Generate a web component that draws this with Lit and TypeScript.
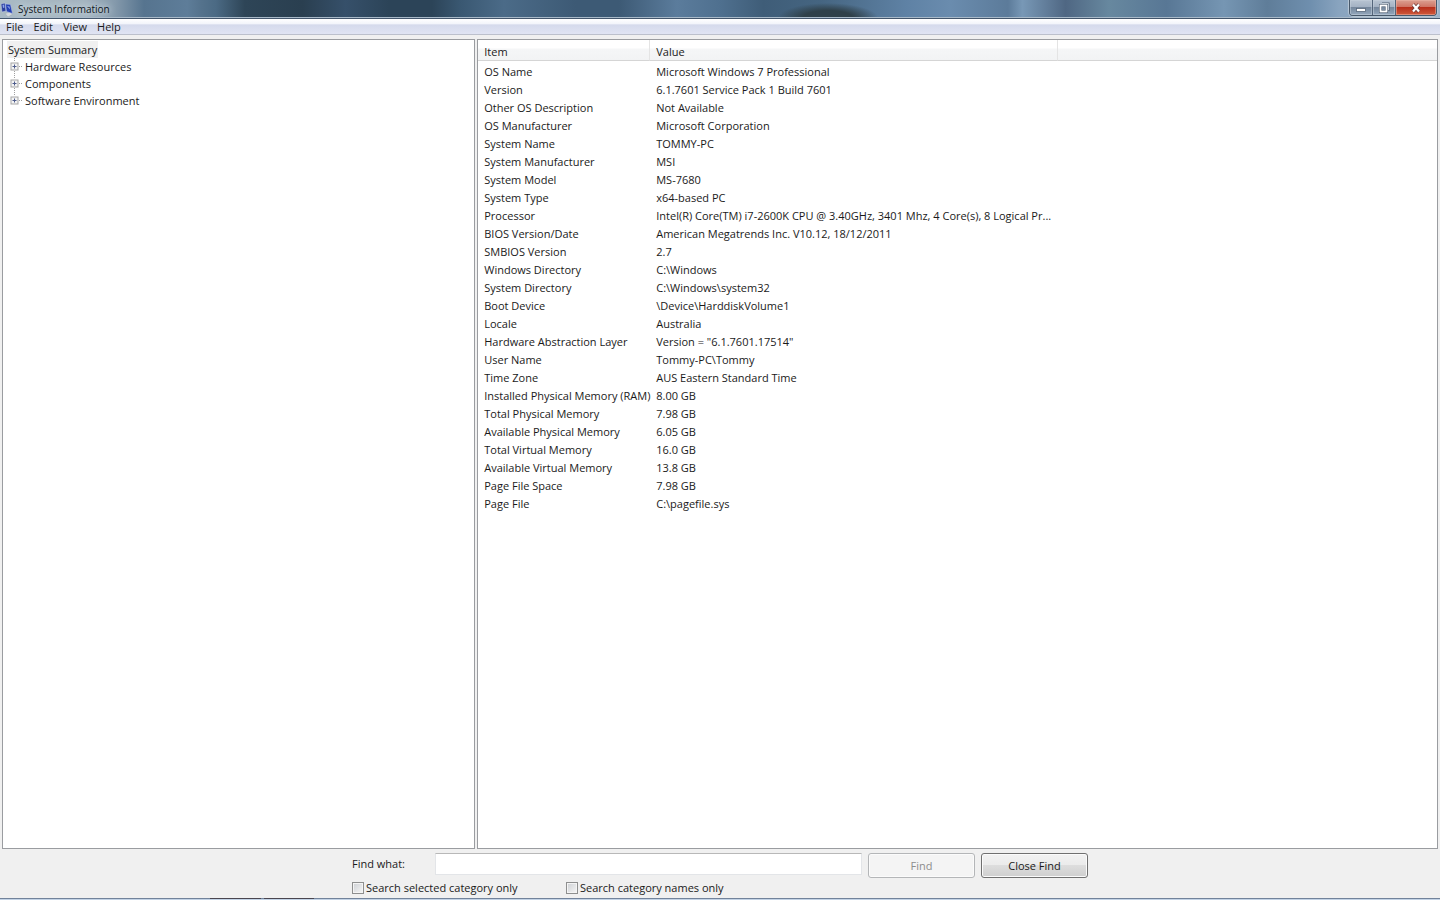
import { LitElement, html, css, svg } from "lit";
import { customElement, state } from "lit/decorators.js";

const ROWS: [string, string][] = [
  ["OS Name", "Microsoft Windows 7 Professional"],
  ["Version", "6.1.7601 Service Pack 1 Build 7601"],
  ["Other OS Description", "Not Available"],
  ["OS Manufacturer", "Microsoft Corporation"],
  ["System Name", "TOMMY-PC"],
  ["System Manufacturer", "MSI"],
  ["System Model", "MS-7680"],
  ["System Type", "x64-based PC"],
  ["Processor", "Intel(R) Core(TM) i7-2600K CPU @ 3.40GHz, 3401 Mhz, 4 Core(s), 8 Logical Pr..."],
  ["BIOS Version/Date", "American Megatrends Inc. V10.12, 18/12/2011"],
  ["SMBIOS Version", "2.7"],
  ["Windows Directory", "C:\\Windows"],
  ["System Directory", "C:\\Windows\\system32"],
  ["Boot Device", "\\Device\\HarddiskVolume1"],
  ["Locale", "Australia"],
  ["Hardware Abstraction Layer", "Version = \"6.1.7601.17514\""],
  ["User Name", "Tommy-PC\\Tommy"],
  ["Time Zone", "AUS Eastern Standard Time"],
  ["Installed Physical Memory (RAM)", "8.00 GB"],
  ["Total Physical Memory", "7.98 GB"],
  ["Available Physical Memory", "6.05 GB"],
  ["Total Virtual Memory", "16.0 GB"],
  ["Available Virtual Memory", "13.8 GB"],
  ["Page File Space", "7.98 GB"],
  ["Page File", "C:\\pagefile.sys"],
];

@customElement("title-bar")
class TitleBar extends LitElement {
  static styles = css`
    :host {
      display: block;
      flex: none;
    }
    .bar {
      box-sizing: border-box;
      height: 19px;
      display: flex;
      justify-content: space-between;
      border-bottom: 1px solid #43566c;
      box-shadow: inset 0 -1px #a9bac9;
      background:
        radial-gradient(ellipse 50px 15px at 57.5% 100%, #2f4049 50%, transparent 100%),
        linear-gradient(90deg, #a9bac4 0%, #a3b3bf 6%, #8499ab 8%, #56748f 10%, #5e7d99 13%,
          #54728c 14%, #4b6a84 15%, #2e4557 17%, #2a3f50 21%, #36506a 24%, #2c4458 27%,
          #2c4458 30%, #3a5872 32%, #4b6b88 35%, #3d5a75 40%, #3d5a75 43%, #5b7c9c 47%,
          #4f708f 50%, #3f5d78 53%, #456581 57%,
          #5f82a5 63%, #6a8cae 66%, #5c7b9a 70%, #7898b6 71%, #4f6783 74%, #67889f 77%,
          #587795 81%, #7696b3 85%, #5f7d99 88%, #6f8fae 91%, #89a4bf 93%, #9db3c8 100%);
    }
    .name {
      display: flex;
      align-items: center;
      gap: 4px;
      padding-left: 1px;
      margin: 0;
      font-size: 10px;
      font-weight: 400;
      line-height: 18px;
      color: #10161c;
      text-shadow: 0 0 6px #d5e0e8, 0 0 8px #d5e0e8;
    }
    .logo {
      width: 13px;
      height: 16px;
    }
    .controls {
      display: flex;
      height: 15px;
      margin-right: 3px;
      border: 1px solid #47586a;
      border-top: 0;
      border-radius: 0 0 4px 4px;
      overflow: hidden;
      box-shadow: 0 0 1px 1px #b9c8d6;
    }
    .control {
      display: grid;
      place-items: center;
      width: 23px;
      padding: 0;
      border: 0;
      border-right: 1px solid #53657a;
      background: linear-gradient(#b8c4d2 0%, #a4b2c3 45%, #75879c 50%, #94a8bd 100%);
      box-shadow: inset 0 0 0 1px #c5d0dc88;
    }
    .close {
      width: 40px;
      border-right: 0;
      background: linear-gradient(#dba091 0%, #cf7565 45%, #b8301b 50%, #cf5a3c 100%);
      box-shadow: inset 0 0 0 1px #eab5a688;
    }
    .glyph {
      width: 12px;
      height: 12px;
    }
  `;
  render() {
    return html`
      <header class="bar">
        <h1 class="name">
          <svg class="logo" viewBox="0 0 13 16" aria-hidden="true">
            <path d="M4 12.500l5-1.500 3 2-5 3z" fill="#d3d8dc" stroke="#9aa6b0" stroke-width=".5" />
            <path d="M0 3l4-1 1 8-4 1z" fill="#2b3f9c" stroke="#c6d0e8" stroke-width=".5" />
            <path d="M4.500 3l5 .5 2 9-6-2z" fill="#2440b4" stroke="#b9c6e8" stroke-width=".5" />
            <path d="M1.500 4l1.500-.5.5 3-1.500.5zM6 5l2.500.5.7 3z" fill="#8ea4ee" />
          </svg>
          System Information
        </h1>
        <div class="controls">
          <button class="control" aria-label="Minimize">
            <svg class="glyph" viewBox="0 0 12 12">
              <rect x="1.500" y="6.500" width="9" height="3" fill="#fff" stroke="#56667a" stroke-width=".8" />
            </svg>
          </button>
          <button class="control" aria-label="Restore">
            <svg class="glyph" viewBox="0 0 12 12" fill="none">
              <path d="M4 1.500h6.500v6.500H9" stroke="#4d5d70" stroke-width="2.200" />
              <path d="M4 1.500h6.500v6.500H9" stroke="#c3ccd6" />
              <rect x="2.500" y="3.500" width="6" height="6" stroke="#4d5d70" stroke-width="3" />
              <rect x="2.500" y="3.500" width="6" height="6" stroke="#fff" stroke-width="1.800" />
            </svg>
          </button>
          <button class="control close" aria-label="Close">
            <svg class="glyph" viewBox="0 0 12 12" fill="none">
              <path d="M3 2.500l6 7M9 2.500l-6 7" stroke="#6b3a38" stroke-width="3.600" />
              <path d="M3 2.500l6 7M9 2.500l-6 7" stroke="#fff" stroke-width="2.200" />
            </svg>
          </button>
        </div>
      </header>
    `;
  }
}

@customElement("menu-bar")
class MenuBar extends LitElement {
  static styles = css`
    :host {
      display: block;
      flex: none;
    }
    .menu {
      display: flex;
      gap: 10px;
      padding: 0 6px;
      border-bottom: 1px solid #bcc0cc;
      background: linear-gradient(#fff 0%, #f3f5fb 30%, #d5daec 40%, #e0e4f3 100%);
    }
    .entry {
      padding: 0;
      border: 0;
      background: none;
      font: inherit;
      line-height: 15px;
      color: #1a1a1a;
    }
  `;
  render() {
    return html`
      <nav class="menu">
        ${["File", "Edit", "View", "Help"].map((m) => html`<button class="entry">${m}</button>`)}
      </nav>
    `;
  }
}

@customElement("category-tree")
class CategoryTree extends LitElement {
  static styles = css`
    :host {
      display: block;
    }
    .tree,
    .children {
      list-style: none;
      margin: 0;
      padding: 0;
    }
    .tree {
      padding: 1px 4px;
    }
    .label {
      display: block;
      padding: 0 1px;
      border: 0;
      background: none;
      font: inherit;
      line-height: 17px;
      color: #1a1a1a;
    }
    .selected {
      background: #f0f0f0;
    }
    .node {
      display: flex;
      align-items: center;
      padding-left: 3px;
    }
    .toggle {
      width: 14px;
      height: 17px;
      flex: none;
    }
  `;
  render() {
    return html`
      <ul class="tree">
        <li>
          <button class="label selected">System Summary</button>
          <ul class="children">
            ${["Hardware Resources", "Components", "Software Environment"].map(
              (name, i, all) => html`
                <li class="node">
                  <svg class="toggle" viewBox="0 0 14 17" fill="none" aria-hidden="true">
                    <path d="M4.500 0v4" stroke="#a0a0a0" stroke-dasharray="1 1" />
                    ${i < all.length - 1
                      ? svg`<path d="M4.500 13v4" stroke="#a0a0a0" stroke-dasharray="1 1" />`
                      : ""}
                    <path d="M9 8.500h4" stroke="#a0a0a0" stroke-dasharray="1 1" />
                    <rect x="1" y="5" width="7" height="7" fill="#f4f4f4" stroke="#a5a5a5" />
                    <path d="M2.500 8.500h4M4.500 6.500v4" stroke="#4f5d8c" />
                  </svg>
                  <button class="label">${name}</button>
                </li>
              `
            )}
          </ul>
        </li>
      </ul>
    `;
  }
}

@customElement("detail-list")
class DetailList extends LitElement {
  static styles = css`
    :host {
      display: block;
    }
    .list {
      width: 100%;
      table-layout: fixed;
      border-collapse: separate;
      border-spacing: 0;
    }
    .item {
      width: 172px;
    }
    .value {
      width: 408px;
    }
    th,
    td {
      box-sizing: border-box;
      padding: 0 0 0 6px;
      text-align: left;
      font-weight: 400;
      white-space: nowrap;
    }
    th {
      height: 21px;
      padding-top: 2px;
      border-bottom: 1px solid #d5d5d5;
      border-right: 1px solid #e4e4e4;
      background: linear-gradient(#fff 0%, #fff 40%, #f5f6f7 45%, #f2f3f4 100%);
    }
    th:last-child {
      border-right: 0;
    }
    td {
      height: 18px;
      line-height: 18px;
    }
    .body::before {
      content: "";
      display: block;
      height: 2px;
    }
  `;
  render() {
    return html`
      <table class="list">
        <thead>
          <tr>
            <th class="item" scope="col">Item</th>
            <th class="value" scope="col">Value</th>
            <th></th>
          </tr>
        </thead>
        <tbody class="body">
          ${ROWS.map(([k, v]) => html`<tr><td>${k}</td><td>${v}</td><td></td></tr>`)}
        </tbody>
      </table>
    `;
  }
}

@customElement("find-bar")
class FindBar extends LitElement {
  @state() private query = "";

  static styles = css`
    :host {
      display: block;
      flex: none;
    }
    .find {
      display: flex;
      justify-content: center;
      gap: 6px;
      padding: 4px 0 1px;
    }
    .fields {
      display: grid;
      grid-template-columns: 83px 131px 296px;
      row-gap: 4px;
    }
    .caption {
      line-height: 22px;
    }
    .text {
      grid-column: 2 / 4;
      box-sizing: border-box;
      width: 427px;
      height: 22px;
      padding: 0 4px;
      border: 1px solid #e3e5e8;
      border-top-color: #b8b8b8;
      background: #fff;
      font: inherit;
    }
    .option {
      display: flex;
      align-items: center;
      gap: 2px;
      line-height: 18px;
    }
    .wide {
      grid-column: 1 / 3;
    }
    .box {
      appearance: none;
      box-sizing: border-box;
      width: 12px;
      height: 12px;
      margin: 0;
      border: 1px solid #8e8f8f;
      background: linear-gradient(135deg, #cdd0d4, #f6f6f6);
      box-shadow: inset 0 0 0 1px #f4f4f4;
    }
    .box:checked {
      background: #3f4f86;
    }
    .push {
      box-sizing: border-box;
      width: 107px;
      height: 25px;
      padding: 0;
      border: 1px solid #707070;
      border-radius: 3px;
      background: linear-gradient(#f2f2f2 0%, #ebebeb 49%, #dddddd 50%, #cfcfcf 100%);
      box-shadow: inset 0 0 0 1px #fbfbfb;
      font: inherit;
      color: #1a1a1a;
    }
    .push:disabled {
      border-color: #b4b6b8;
      background: #f4f4f4;
      color: #8d8d8d;
    }
  `;
  render() {
    return html`
      <form class="find" @submit=${(e: Event) => e.preventDefault()}>
        <div class="fields">
          <label class="caption" for="query">Find what:</label>
          <input
            class="text"
            id="query"
            type="text"
            .value=${this.query}
            @input=${(e: Event) => (this.query = (e.target as HTMLInputElement).value)}
          />
          <label class="option wide"><input class="box" type="checkbox" />Search selected category only</label>
          <label class="option"><input class="box" type="checkbox" />Search category names only</label>
        </div>
        <button class="push" type="submit" ?disabled=${!this.query}>Find</button>
        <button class="push" type="button">Close Find</button>
      </form>
    `;
  }
}

@customElement("app-root")
class AppRoot extends LitElement {
  static styles = css`
    :host {
      display: flex;
      flex-direction: column;
      height: 100vh;
      overflow: hidden;
      background: #f0f0f0;
      color: #1a1a1a;
      font-family: "Open Sans", "Noto Sans", sans-serif;
      font-size: 11px;
    }
    .panes {
      flex: 1;
      min-height: 0;
      display: grid;
      grid-template-columns: 33fr 67fr;
      gap: 2px;
      padding: 4px 2px 0;
    }
    .pane {
      min-width: 0;
      border: 1px solid #9a9ca0;
      background: #fff;
      overflow: hidden;
    }
    .edge {
      flex: none;
      height: 2px;
      background:
        linear-gradient(90deg, transparent 14.6%, #4a4650 14.6% 18.1%, transparent 18.1% 18.3%,
          #4a4650 18.3% 21.8%, transparent 21.8%) top / 100% 1px no-repeat,
        linear-gradient(#72839b 50%, #c3d3e6 50%);
    }
  `;
  render() {
    return html`
      <title-bar></title-bar>
      <menu-bar></menu-bar>
      <main class="panes">
        <category-tree class="pane"></category-tree>
        <detail-list class="pane"></detail-list>
      </main>
      <find-bar></find-bar>
      <div class="edge"></div>
    `;
  }
}
